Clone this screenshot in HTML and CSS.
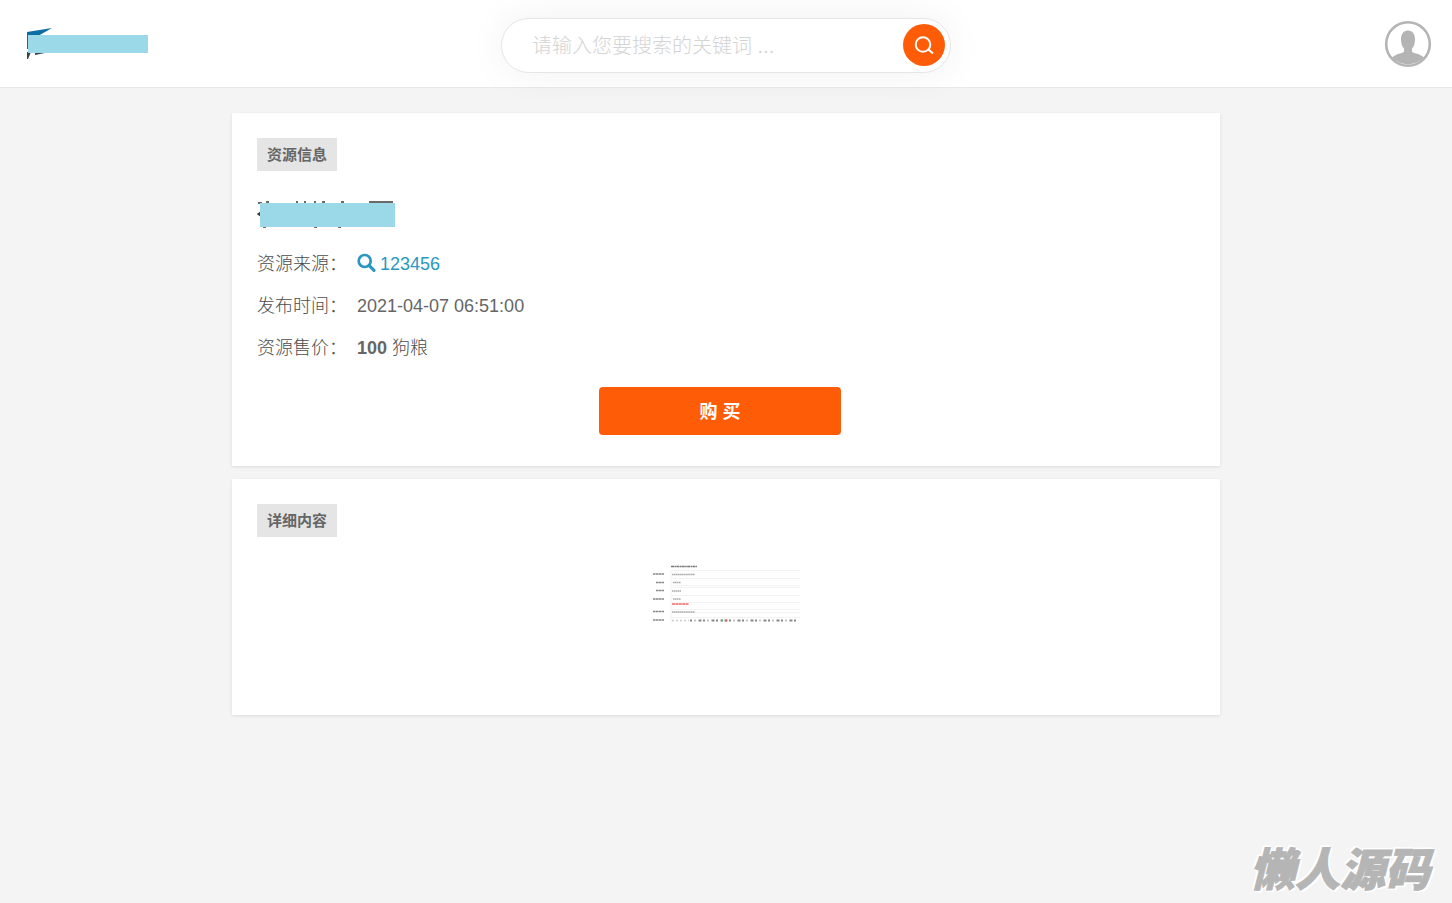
FILE: index.html
```html
<!DOCTYPE html>
<html lang="zh-CN">
<head>
<meta charset="utf-8">
<meta name="viewport" content="width=device-width, initial-scale=1">
<title>资源信息</title>
<link rel="stylesheet" href="styles.css">
</head>
<body>
<header class="header">
  <a class="logo" href="#" aria-label="首页">
    <svg width="124" height="34" viewBox="0 0 124 34" aria-hidden="true">
      <path d="M1 5 26 1 12 9H2V22H1Z" fill="#0b6fa5"/>
      <path d="M1 25H5L2 32H1ZM9 25H24L9 28Z" fill="#33444c"/>
      <path d="M2 8H122V26H2Z" fill="#9bd9e9"/>
    </svg>
  </a>
  <form class="search" role="search">
    <input class="search-input" type="text" aria-label="搜索关键词" placeholder="请输入您要搜索的关键词 ...">
    <button class="search-button" type="button" aria-label="搜索">
      <svg width="22" height="22" viewBox="0 0 22 22" fill="none" stroke="currentColor" stroke-width="2" aria-hidden="true">
        <circle cx="10" cy="10.500" r="7.300"/>
        <path d="M14 16H16L20 19.500"/>
      </svg>
    </button>
  </form>
  <a class="avatar" href="#" aria-label="个人中心">
    <svg width="48" height="48" viewBox="0 0 48 48" aria-hidden="true">
      <circle cx="24" cy="24" r="21.800" fill="#fff" stroke="#b4b4b4" stroke-width="2.600"/>
      <path d="M24 10.500c5 0 7 4 7 9 0 4-1 7-3 9v3c1 2 8 2 12 6a22 22 0 0 1-32 0c4-4 11-4 12-6v-3c-2-2-3-5-3-9 0-5 2-9 7-9Z" fill="#b4b4b4"/>
    </svg>
  </a>
</header>
<main class="content">
  <section class="card">
    <h2 class="tag">资源信息</h2>
    <div class="title">
      <svg width="139" height="30" viewBox="0 0 139 30" aria-hidden="true">
        <path d="M1 4h4M9 3h3M39 3h2M47 3h2M57 3h2M65 3h3M84 3h3M112 3h24M1 15l3-2v4ZM6 28h3M57 28h3M81 28h3" stroke="#3a3a3a" stroke-width="1.500" fill="#3a3a3a"/>
        <path d="M3 4H138V28H3Z" fill="#9bd9e9"/>
      </svg>
    </div>
    <dl class="info">
      <dt>资源来源：</dt>
      <dd><a class="source" href="#"><svg width="19" height="22" viewBox="0 0 19 22" fill="none" stroke="currentColor" aria-hidden="true"><circle cx="7.700" cy="8" r="6" stroke-width="2.700"/><path d="M12.500 12.800 17 17.300" stroke-width="3.200" stroke-linecap="round"/></svg>123456</a></dd>
      <dt>发布时间：</dt>
      <dd>2021-04-07 06:51:00</dd>
      <dt>资源售价：</dt>
      <dd><strong>100</strong> <span class="unit">狗粮</span></dd>
    </dl>
    <div class="actions"><button class="buy" type="button">购 买</button></div>
  </section>
  <section class="card card-detail">
    <h2 class="tag">详细内容</h2>
    <a class="preview" href="#" aria-label="查看大图">
      <svg width="150" height="64" viewBox="0 0 150 64" fill="none" aria-hidden="true">
        <path d="M20 7.500H149M20 15.500H149M20 22.500H149M20 24.500H149M20 32.500H149M20 39.500H149M20 46.500H149M20 49.500H149M20 54.500H149" stroke="#f3f3f3"/>
        <path d="M20 7V60" stroke="#f3f3f3"/>
        <path d="M20 3.500H46" stroke="#777" stroke-width="1.300" stroke-dasharray="3 .5 1.500 .4"/>
        <path d="M2 11H13M5 19.500H13M5 27.500H13M2 36H13M2 48.500H13M2 57H13" stroke="#888" stroke-width="1.300" stroke-dasharray="2.500 .4"/>
        <path d="M21 11.500H44M22 19.500H30M21 28H30M22 36H30M21 49H44" stroke="#aaa" stroke-width="1.300" stroke-dasharray="1.500 .4"/>
        <path d="M21 41H38" stroke="#f26b6b" stroke-width="1.600" stroke-dasharray="3 .4"/>
        <path d="M21 57.500H38" stroke="#ccc" stroke-width="1.300" stroke-dasharray="2 2"/>
        <path d="M39 57.500H146" stroke="#888" stroke-width="2" stroke-dasharray="2 2.500 1 3 3 1.500"/>
        <path d="M70 57.500h2" stroke="#56a36e" stroke-width="2"/>
        <path d="M74 57.500h2" stroke="#e96a58" stroke-width="2"/>
      </svg>
    </a>
  </section>
</main>
<div class="watermark">懒人源码</div>
</body>
</html>
```
FILE: styles.css
```css
* { box-sizing: border-box; }

body {
  margin: 0;
  min-height: 100vh;
  background: #f4f4f4;
  color: #666;
  font: 18px/42px "Liberation Sans", "Noto Sans CJK SC", sans-serif;
}

a { color: #2a98c0; text-decoration: none; }
svg { display: block; }

.header {
  display: grid;
  grid-template-columns: 1fr minmax(0, 450px) 1fr;
  align-items: center;
  padding: 18px 20px 14px;
  background: #fff;
  border-bottom: 1px solid #e9e9e9;
}

.logo { justify-self: start; padding: 0 0 4px 6px; }
.avatar { justify-self: end; padding-bottom: 4px; }

.search {
  display: flex;
  align-items: center;
  height: 55px;
  padding: 0 5px 2px 30px;
  background: #fff;
  border: 1px solid #e6e6e6;
  border-radius: 28px;
  box-shadow: 0 0 40px rgba(0, 0, 0, .06);
}

.search-input {
  flex: 1;
  min-width: 0;
  padding: 2px 0 0;
  border: 0;
  outline: 0;
  background: none;
  color: #666;
  font: 300 20px/30px "Liberation Sans", "Noto Sans CJK SC", sans-serif;
}

.search-input::placeholder { color: #d4d4d4; opacity: 1; }

.search-button {
  display: grid;
  place-items: center;
  width: 42px;
  height: 42px;
  padding: 0;
  border: 0;
  border-radius: 50%;
  background: #ff5c07;
  color: #fff;
}

.content {
  display: grid;
  gap: 13px;
  max-width: 1038px;
  margin: 0 auto;
  padding: 25px;
}

.card {
  padding: 25px 25px 31px;
  background: #fff;
  box-shadow: 0 1px 3px rgba(0, 0, 0, .1);
}

.tag {
  width: fit-content;
  margin: 0;
  padding: 0 10px;
  background: #e5e5e5;
  font-size: 15px;
  line-height: 33px;
}

.title { padding: 28px 0 14px; }

.info {
  display: grid;
  grid-template-columns: 100px 1fr;
  margin: 0;
}

.info dt, .unit { color: #4c4c4c; font-weight: 300; }
.info dd { margin: 0; }

.source {
  display: flex;
  align-items: center;
  gap: 4px;
}

.actions { padding: 18px 12px 0 0; text-align: center; }

.buy {
  display: block;
  width: 242px;
  height: 48px;
  margin: 0 auto;
  border: 0;
  border-radius: 4px;
  background: #ff5c07;
  color: #fff;
  font: bold 18px/48px "Liberation Sans", "Noto Sans CJK SC", sans-serif;
}

.card-detail { padding-bottom: 88px; }

.preview {
  display: block;
  width: fit-content;
  margin: 26px auto 0;
}

.watermark {
  position: absolute;
  right: 22px;
  bottom: 6px;
  color: #b5b5b5;
  font: italic 900 45px/60px "Noto Sans CJK SC", sans-serif;
  -webkit-text-stroke: 1px #b5b5b5;
  text-shadow: 2px 0 #fff, -2px 0 #fff, 0 2px #fff, 0 -2px #fff, 2px 2px #fff, -2px -2px #fff;
}
```
